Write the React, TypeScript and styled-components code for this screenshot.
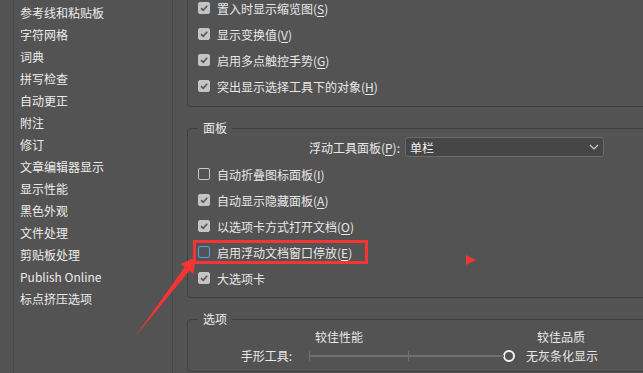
import styled, { createGlobalStyle, css } from "styled-components";

const GlobalStyle = createGlobalStyle`
  html, body {
    margin: 0;
    padding: 0;
    background: #535353;
  }
  body {
    font-family: "Noto Sans CJK SC", "Noto Sans", sans-serif;
    font-size: 12px;
    color: #e8e8e8;
  }
`;

const sections = [
  "参考线和粘贴板",
  "字符网格",
  "词典",
  "拼写检查",
  "自动更正",
  "附注",
  "修订",
  "文章编辑器显示",
  "显示性能",
  "黑色外观",
  "文件处理",
  "剪贴板处理",
  "Publish Online",
  "标点挤压选项",
];

type Opt = {
  label: string;
  hotkey?: string;
  checked: boolean;
  focus?: boolean;
  marked?: boolean;
};

const interfaceOpts: Opt[] = [
  { label: "置入时显示缩览图", hotkey: "S", checked: true },
  { label: "显示变换值", hotkey: "V", checked: true },
  { label: "启用多点触控手势", hotkey: "G", checked: true },
  { label: "突出显示选择工具下的对象", hotkey: "H", checked: true },
];

const panelOpts: Opt[] = [
  { label: "自动折叠图标面板", hotkey: "I", checked: false },
  { label: "自动显示隐藏面板", hotkey: "A", checked: true },
  { label: "以选项卡方式打开文档", hotkey: "O", checked: true },
  { label: "启用浮动文档窗口停放", hotkey: "E", checked: false, focus: true, marked: true },
  { label: "大选项卡", checked: true },
];

function Label({ label, hotkey }: { label: string; hotkey?: string }) {
  return (
    <span>
      {label}
      {hotkey && (
        <>
          (<Key>{hotkey}</Key>)
        </>
      )}
    </span>
  );
}

function Option({ opt }: { opt: Opt }) {
  return (
    <Row>
      <Box $checked={opt.checked} $focus={opt.focus}>
        {opt.checked && (
          <svg width="10" height="10" viewBox="0 0 10 10">
            <path d="M2 5.2 L4.2 7.3 L8.2 2.8" fill="none" stroke="#555" strokeWidth="1.6" />
          </svg>
        )}
      </Box>
      <Label label={opt.label} hotkey={opt.hotkey} />
      {opt.marked && (
        <>
          <Highlight />
          <Pointer />
        </>
      )}
    </Row>
  );
}

export default function App() {
  return (
    <Page>
      <GlobalStyle />
      <Sidebar>
        {sections.map((s) => (
          <NavItem key={s}>{s}</NavItem>
        ))}
      </Sidebar>
      <Main>
        <Group $cut>
          {interfaceOpts.map((o) => (
            <Option key={o.label} opt={o} />
          ))}
        </Group>

        <Group>
          <Legend>面板</Legend>
          <SelectRow>
            <SelectLabel>
              <Label label="浮动工具面板" hotkey="P" />:
            </SelectLabel>
            <Select>
              <span>单栏</span>
              <svg width="10" height="6" viewBox="0 0 10 6">
                <path d="M1 1 L5 5 L9 1" fill="none" stroke="#cfcfcf" strokeWidth="1.2" />
              </svg>
            </Select>
          </SelectRow>
          <Rows>
            {panelOpts.map((o) => (
              <Option key={o.label} opt={o} />
            ))}
          </Rows>
        </Group>

        <Group>
          <Legend>选项</Legend>
          <SliderGrid>
            <Cell $col={2} $pad="0 0 0 6px">较佳性能</Cell>
            <Cell $col={3} $pad="0 0 0 11px">较佳品质</Cell>
            <Cell $col={1} $pad="0 17px 0 0" $right>
              手形工具:
            </Cell>
            <Slider>
              <Track>
                <Tick style={{ left: 0 }} />
                <Tick style={{ left: 99 }} />
              </Track>
              <Thumb />
            </Slider>
            <Cell $col={3}>无灰条化显示</Cell>
          </SliderGrid>
        </Group>
      </Main>

      <Arrow width="70" height="88" viewBox="0 0 70 88">
        <polygon
          points="66,3 63.3,19.9 59.4,16.8 4,84 54.6,13.2 50.7,10.1"
          fill="#f53434"
        />
      </Arrow>
    </Page>
  );
}

const Page = styled.div`
  position: relative;
  display: flex;
  width: 643px;
  height: 373px;
  overflow: hidden;
  background: #535353;
`;

const Sidebar = styled.div`
  flex: none;
  box-sizing: border-box;
  width: 160px;
  margin-left: 13px;
  padding: 2px 0 0 6px;
  border-left: 1px solid #484848;
  border-right: 1px solid #484848;
`;

const NavItem = styled.div`
  height: 22px;
  line-height: 22px;
  white-space: nowrap;
  color: #ececec;
`;

const Main = styled.div`
  flex: 1;
  min-width: 0;
  padding-left: 14px;
`;

const Group = styled.fieldset<{ $cut?: boolean }>`
  margin: 13px -40px 0 0;
  padding: 0 0 6px 0;
  border: 1px solid #3f3f3f;
  border-radius: 4px;
  min-width: 0;

  ${(p) =>
    p.$cut &&
    css`
      margin-top: -5px;
      padding-bottom: 7px;
      border-top: 0;
      border-radius: 0 0 4px 4px;
    `}
`;

const Legend = styled.legend`
  margin-left: 10px;
  padding: 0 5px;
  font-size: 12px;
  line-height: 16px;
  color: #ececec;
`;

const Rows = styled.div`
  margin-top: 3px;
`;

const Row = styled.div`
  position: relative;
  display: flex;
  align-items: center;
  gap: 7px;
  height: 26px;
  padding-left: 10px;
  white-space: nowrap;
`;

const Box = styled.span<{ $checked: boolean; $focus?: boolean }>`
  flex: none;
  box-sizing: border-box;
  width: 12px;
  height: 12px;
  border-radius: 2px;
  display: flex;
  align-items: center;
  justify-content: center;
  border: 1px solid ${(p) => (p.$focus ? "#5a9fe6" : p.$checked ? "#c4c4c4" : "#c8c8c8")};
  background: ${(p) => (p.$checked ? "#c4c4c4" : "transparent")};
`;

const Key = styled.span`
  text-decoration: underline;
  text-underline-offset: 2px;
`;

const Highlight = styled.span`
  position: absolute;
  left: 5px;
  top: 1px;
  width: 175px;
  height: 24px;
  box-sizing: border-box;
  border: 3px solid #f23636;
`;

const Pointer = styled.span`
  position: absolute;
  left: 278px;
  top: 16px;
  width: 0;
  height: 0;
  border-left: 10px solid #f23636;
  border-top: 5px solid transparent;
  border-bottom: 5px solid transparent;
`;

const SelectRow = styled.div`
  display: flex;
  align-items: center;
  gap: 5px;
  height: 22px;
`;

const SelectLabel = styled.span`
  width: 212px;
  text-align: right;
  white-space: nowrap;
`;

const Select = styled.div`
  box-sizing: border-box;
  width: 199px;
  height: 20px;
  display: flex;
  align-items: center;
  justify-content: space-between;
  padding: 0 4px 0 4px;
  border: 1px solid #6b6b6b;
  border-radius: 3px;
  background: #464646;
  color: #f2f2f2;
`;

const SliderGrid = styled.div`
  display: grid;
  grid-template-columns: 121px 217px auto;
  grid-auto-rows: 19px;
  align-items: center;
`;

const Cell = styled.span<{ $col: number; $pad?: string; $right?: boolean }>`
  grid-column: ${(p) => p.$col};
  padding: ${(p) => p.$pad ?? "0"};
  text-align: ${(p) => (p.$right ? "right" : "left")};
  white-space: nowrap;
`;

const Slider = styled.div`
  grid-column: 2;
  display: flex;
  align-items: center;
  height: 19px;
`;

const Track = styled.div`
  position: relative;
  width: 195px;
  height: 2px;
  background: #6f6f6f;
`;

const Tick = styled.span`
  position: absolute;
  top: -4px;
  width: 1px;
  height: 10px;
  background: #6f6f6f;
`;

const Thumb = styled.span`
  box-sizing: border-box;
  width: 12px;
  height: 12px;
  margin-left: -1px;
  border-radius: 50%;
  border: 2px solid #f2f2f2;
  background: #535353;
`;

const Arrow = styled.svg`
  position: absolute;
  left: 130px;
  top: 254px;
  pointer-events: none;
`;
